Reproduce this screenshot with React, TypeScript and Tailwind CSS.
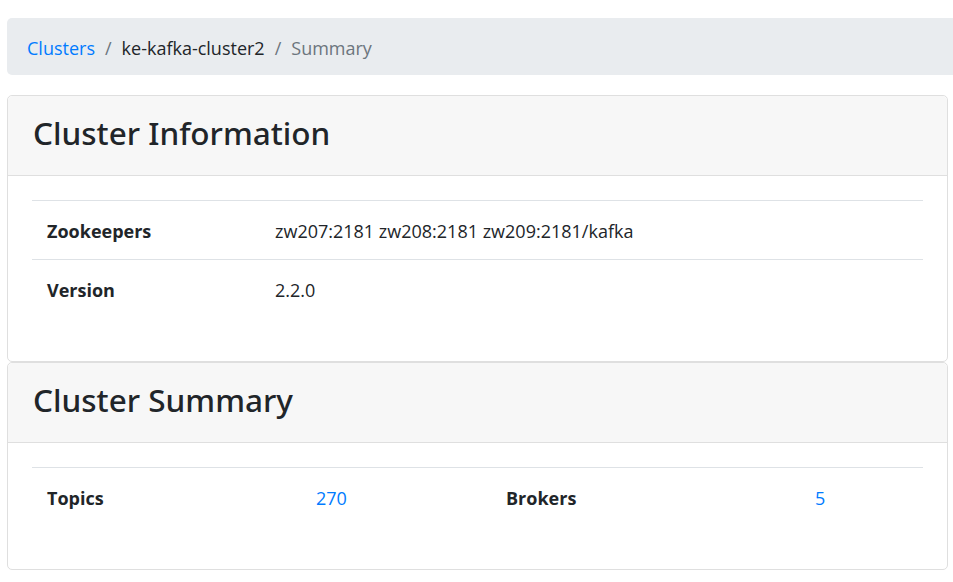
export default function App() {
    const font = { fontFamily: '"Open Sans", "Noto Sans", sans-serif' };
    const titleFont = { fontFamily: '"Noto Sans", "Open Sans", sans-serif' };
    return (
        <div className="w-[953px] h-[582px] overflow-hidden bg-white text-[#212529]" style={font}>
            <div className="pt-[18px] pl-[7px]">
                {/* breadcrumb */}
                <nav className="w-[960px] h-[57px] bg-[#e9ecef] rounded-[5px] px-[20px] pt-[3px] flex items-center text-[18px]">
                    <a className="text-[#007bff]">Clusters</a>
                    <span className="px-[10px] text-[#6c757d]">/</span>
                    <span>ke-kafka-cluster2</span>
                    <span className="px-[10px] text-[#6c757d]">/</span>
                    <span className="text-[#6c757d]">Summary</span>
                </nav>

                <div className="w-[941px] mt-[20px]">
                    {/* cluster information */}
                    <div className="border border-[#dfdfdf] rounded-[5px] bg-white">
                        <div className="bg-[#f7f7f7] border-b border-[#dfdfdf] rounded-t-[5px] px-[25px] pt-[13px] pb-[18px]">
                            <h2 className="text-[31.5px] leading-[48px] font-medium" style={titleFont}>Cluster Information</h2>
                        </div>
                        <div className="p-[24px] pb-[42px]">
                            <table className="w-full text-[18px] border-collapse">
                                <tbody>
                                    <tr className="border-t border-[#dee2e6] h-[59px]">
                                        <td className="w-[228px] px-[15px] pt-[3px] font-bold">Zookeepers</td>
                                        <td className="px-[15px] pt-[3px]">zw207:2181 zw208:2181 zw209:2181/kafka</td>
                                    </tr>
                                    <tr className="border-t border-[#dee2e6] h-[59px]">
                                        <td className="px-[15px] pt-[3px] font-bold">Version</td>
                                        <td className="px-[15px] pt-[3px]">2.2.0</td>
                                    </tr>
                                </tbody>
                            </table>
                        </div>
                    </div>

                    {/* cluster summary */}
                    <div className="border border-[#dfdfdf] rounded-[5px] bg-white">
                        <div className="bg-[#f7f7f7] border-b border-[#dfdfdf] rounded-t-[5px] px-[25px] pt-[13px] pb-[18px]">
                            <h2 className="text-[31.5px] leading-[48px] font-medium" style={titleFont}>Cluster Summary</h2>
                        </div>
                        <div className="p-[24px] pb-[43px]">
                            <table className="w-full text-[18px] border-collapse">
                                <tbody>
                                    <tr className="border-t border-[#dee2e6] h-[59px]">
                                        <td className="w-[269px] px-[15px] pt-[3px] font-bold">Topics</td>
                                        <td className="w-[190px] px-[15px] pt-[3px]"><a className="text-[#007bff]">270</a></td>
                                        <td className="w-[309px] px-[15px] pt-[3px] font-bold">Brokers</td>
                                        <td className="px-[15px] pt-[3px]"><a className="text-[#007bff]">5</a></td>
                                    </tr>
                                </tbody>
                            </table>
                        </div>
                    </div>
                </div>
            </div>
        </div>
    );
}
